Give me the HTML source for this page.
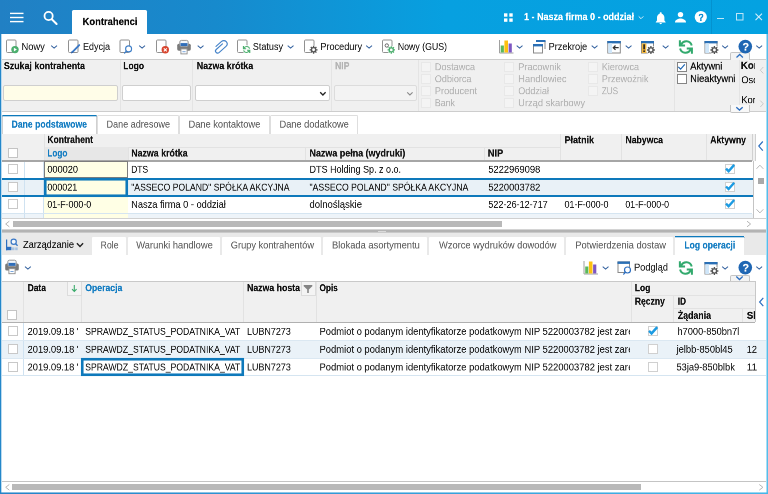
<!DOCTYPE html>
<html lang="pl"><head><meta charset="utf-8"><title>Kontrahenci</title>
<style>
html,body{margin:0;padding:0;background:#fff}
#r{position:relative;width:768px;height:494px;overflow:hidden;background:#fff;font-family:"Liberation Sans",sans-serif;font-size:20px;line-height:24px}
#r div,#r svg,#r span.t{position:absolute;display:block}
#r span.t{left:0;top:0;white-space:pre;transform-origin:0 0;z-index:2;will-change:transform;-webkit-text-stroke:0.2px currentColor}
#r .clip{overflow:hidden}

</style></head><body><div id="r">
<div style="left:0px;top:0px;width:768px;height:34px;background:linear-gradient(90deg,#2180c4 0%,#178acd 28%,#07a0e0 58%,#04a2e1 100%);"></div>
<div style="left:711px;top:0px;width:1px;height:34px;background:rgba(0,60,120,0.16);"></div>
<div style="left:72px;top:10px;width:75px;height:24px;background:#fff;border-radius:1.500px 1.500px 0 0;"></div>
<span class="t" style="transform:translate(82.50px,15.50px) scale(0.4713,.5);color:#080808;font-weight:bold;-webkit-text-stroke-width:.4px;">Kontrahenci</span>
<span class="t" style="transform:translate(524.00px,10.60px) scale(0.4499,.5);color:#fff;font-weight:bold;-webkit-text-stroke-width:.4px;">1 - Nasza firma 0 - oddział</span>
<span class="t" style="transform:translate(698.20px,11.30px) scale(0.4650,.5);color:#0a8fd4;font-weight:bold;-webkit-text-stroke-width:.4px;">?</span>
<div style="left:0px;top:34px;width:1px;height:460px;background:#2487ca;"></div>
<div style="left:1px;top:34px;width:1px;height:460px;background:rgba(28,134,203,0.3);"></div>
<div style="left:767px;top:34px;width:1px;height:460px;background:#56bdea;"></div>
<div style="left:766px;top:34px;width:1px;height:460px;background:rgba(86,189,234,0.5);"></div>
<div style="left:0px;top:493px;width:768px;height:1px;background:linear-gradient(90deg,#2684c8,#45b6e8);"></div>
<div style="left:0px;top:492px;width:768px;height:1px;background:linear-gradient(90deg,#2684c8,#45b6e8);opacity:.55;"></div>
<span class="t" style="transform:translate(21.50px,40.50px) scale(0.4659,.5);color:#222;">Nowy</span>
<span class="t" style="transform:translate(83.00px,40.50px) scale(0.4498,.5);color:#222;">Edycja</span>
<span class="t" style="transform:translate(252.80px,40.50px) scale(0.4528,.5);color:#222;">Statusy</span>
<span class="t" style="transform:translate(320.30px,40.50px) scale(0.4575,.5);color:#222;">Procedury</span>
<span class="t" style="transform:translate(397.80px,40.50px) scale(0.4384,.5);color:#222;">Nowy (GUS)</span>
<span class="t" style="transform:translate(548.60px,40.50px) scale(0.4569,.5);color:#222;">Przekroje</span>
<span class="t" style="transform:translate(742.40px,40.95px) scale(0.5000,.5);color:#fff;font-weight:bold;-webkit-text-stroke-width:.4px;font-size:22px;">?</span>
<div style="left:730px;top:51.5px;width:20px;height:8px;background:#f4f4f4;z-index:1;border:1px solid #c4c4c4;border-bottom:none;box-sizing:border-box;border-radius:2px 2px 0 0;"></div>
<div style="left:2px;top:59px;width:764px;height:53px;background:#f0f0f0;border-top:1px solid #cdcdcd;border-bottom:1px solid #cdcdcd;box-sizing:border-box;"></div>
<div style="left:120px;top:60px;width:1px;height:51px;background:#e4e4e4;"></div>
<div style="left:192px;top:60px;width:1px;height:51px;background:#e4e4e4;"></div>
<div style="left:331px;top:60px;width:1px;height:51px;background:#e4e4e4;"></div>
<div style="left:418px;top:60px;width:1px;height:51px;background:#e4e4e4;"></div>
<div style="left:674px;top:60px;width:1px;height:51px;background:#e4e4e4;"></div>
<div style="left:739px;top:60px;width:1px;height:51px;background:#e4e4e4;"></div>
<span class="t" style="transform:translate(3.90px,59.70px) scale(0.4422,.5);color:#111;font-weight:bold;-webkit-text-stroke-width:.4px;">Szukaj kontrahenta</span>
<span class="t" style="transform:translate(123.20px,59.70px) scale(0.4256,.5);color:#111;font-weight:bold;-webkit-text-stroke-width:.4px;">Logo</span>
<span class="t" style="transform:translate(196.80px,59.70px) scale(0.4412,.5);color:#111;font-weight:bold;-webkit-text-stroke-width:.4px;">Nazwa krótka</span>
<span class="t" style="transform:translate(335.00px,59.70px) scale(0.4349,.5);color:#b4b4b4;font-weight:bold;-webkit-text-stroke-width:.4px;">NIP</span>
<div style="left:3px;top:85px;width:115px;height:16px;background:#fffde8;border:1px solid #cfcfcf;box-sizing:border-box;border-radius:2px;"></div>
<div style="left:122px;top:85px;width:69px;height:16px;background:#fff;border:1px solid #cfcfcf;box-sizing:border-box;border-radius:2px;"></div>
<div style="left:195px;top:85px;width:135px;height:16px;background:#fff;border:1px solid #cfcfcf;box-sizing:border-box;border-radius:2px;"></div>
<div style="left:334px;top:85px;width:83px;height:16px;background:#f3f3f3;border:1px solid #dcdcdc;box-sizing:border-box;border-radius:2px;"></div>
<div style="left:421px;top:62px;width:10px;height:10px;background:#f4f4f4;border:1px solid #e8e8e8;box-sizing:border-box;"></div>
<span class="t" style="transform:translate(434.80px,60.80px) scale(0.4578,.5);color:#b4b4b4;">Dostawca</span>
<div style="left:421px;top:74px;width:10px;height:10px;background:#f4f4f4;border:1px solid #e8e8e8;box-sizing:border-box;"></div>
<span class="t" style="transform:translate(434.80px,72.80px) scale(0.4522,.5);color:#b4b4b4;">Odbiorca</span>
<div style="left:421px;top:86px;width:10px;height:10px;background:#f4f4f4;border:1px solid #e8e8e8;box-sizing:border-box;"></div>
<span class="t" style="transform:translate(434.80px,84.80px) scale(0.4629,.5);color:#b4b4b4;">Producent</span>
<div style="left:421px;top:98px;width:10px;height:10px;background:#f4f4f4;border:1px solid #e8e8e8;box-sizing:border-box;"></div>
<span class="t" style="transform:translate(434.80px,96.80px) scale(0.4430,.5);color:#b4b4b4;">Bank</span>
<div style="left:504.3px;top:62px;width:10px;height:10px;background:#f4f4f4;border:1px solid #e8e8e8;box-sizing:border-box;"></div>
<span class="t" style="transform:translate(518.20px,60.80px) scale(0.4639,.5);color:#b4b4b4;">Pracownik</span>
<div style="left:504.3px;top:74px;width:10px;height:10px;background:#f4f4f4;border:1px solid #e8e8e8;box-sizing:border-box;"></div>
<span class="t" style="transform:translate(518.20px,72.80px) scale(0.4672,.5);color:#b4b4b4;">Handlowiec</span>
<div style="left:504.3px;top:86px;width:10px;height:10px;background:#f4f4f4;border:1px solid #e8e8e8;box-sizing:border-box;"></div>
<span class="t" style="transform:translate(518.20px,84.80px) scale(0.4542,.5);color:#b4b4b4;">Oddział</span>
<div style="left:504.3px;top:98px;width:10px;height:10px;background:#f4f4f4;border:1px solid #e8e8e8;box-sizing:border-box;"></div>
<span class="t" style="transform:translate(518.20px,96.80px) scale(0.4659,.5);color:#b4b4b4;">Urząd skarbowy</span>
<div style="left:587.8px;top:62px;width:10px;height:10px;background:#f4f4f4;border:1px solid #e8e8e8;box-sizing:border-box;"></div>
<span class="t" style="transform:translate(601.80px,60.80px) scale(0.4522,.5);color:#b4b4b4;">Kierowca</span>
<div style="left:587.8px;top:74px;width:10px;height:10px;background:#f4f4f4;border:1px solid #e8e8e8;box-sizing:border-box;"></div>
<span class="t" style="transform:translate(601.80px,72.80px) scale(0.4567,.5);color:#b4b4b4;">Przewoźnik</span>
<div style="left:587.8px;top:86px;width:10px;height:10px;background:#f4f4f4;border:1px solid #e8e8e8;box-sizing:border-box;"></div>
<span class="t" style="transform:translate(601.80px,84.80px) scale(0.4050,.5);color:#b4b4b4;">ZUS</span>
<div style="left:676.5px;top:61.6px;width:10px;height:10px;background:#fff;border:1px solid #858585;box-sizing:border-box;"></div>
<div style="left:676.5px;top:74px;width:10px;height:10px;background:#fff;border:1px solid #858585;box-sizing:border-box;"></div>
<span class="t" style="transform:translate(690.20px,60.00px) scale(0.4659,.5);color:#0c0c0c;-webkit-text-stroke-width:.45px;">Aktywni</span>
<span class="t" style="transform:translate(690.20px,72.50px) scale(0.4664,.5);color:#0c0c0c;-webkit-text-stroke-width:.45px;">Nieaktywni</span>
<div class="clip" style="left:0;top:0;width:755px;height:494px"><span class="t" style="transform:translate(740.80px,59.30px) scale(0.4850,.5);color:#111;font-weight:bold;-webkit-text-stroke-width:.4px;">Kor</span></div>
<div class="clip" style="left:0;top:0;width:755px;height:494px"><span class="t" style="transform:translate(741.30px,73.80px) scale(0.4650,.5);color:#111;">Osc</span></div>
<div class="clip" style="left:0;top:0;width:755px;height:494px"><span class="t" style="transform:translate(741.30px,93.80px) scale(0.4650,.5);color:#111;">Kor</span></div>
<div style="left:730px;top:105px;width:20px;height:7.5px;background:#f8f8f8;border:1px solid #c4c4c4;border-top:none;box-sizing:border-box;border-radius:0 0 2px 2px;"></div>
<div style="left:2px;top:115px;width:95px;height:19px;background:#fff;border:1px solid #d0d0d0;border-bottom:none;border-top:1px solid #0e79bb;box-sizing:border-box;"></div>
<span class="t" style="transform:translate(11.50px,118.10px) scale(0.4327,.5);color:#147dc2;font-weight:bold;-webkit-text-stroke-width:.4px;">Dane podstawowe</span>
<div style="left:97px;top:115px;width:82px;height:18.5px;background:#fff;border:1px solid #dedede;border-bottom:none;box-sizing:border-box;border-radius:1.500px 1.500px 0 0;"></div>
<span class="t" style="transform:translate(106.50px,118.10px) scale(0.4533,.5);color:#626262;">Dane adresowe</span>
<div style="left:179px;top:115px;width:91px;height:18.5px;background:#fff;border:1px solid #dedede;border-bottom:none;box-sizing:border-box;border-radius:1.500px 1.500px 0 0;"></div>
<span class="t" style="transform:translate(188.50px,118.10px) scale(0.4646,.5);color:#626262;">Dane kontaktowe</span>
<div style="left:270px;top:115px;width:88px;height:18.5px;background:#fff;border:1px solid #dedede;border-bottom:none;box-sizing:border-box;border-radius:1.500px 1.500px 0 0;"></div>
<span class="t" style="transform:translate(279.50px,118.10px) scale(0.4617,.5);color:#626262;">Dane dodatkowe</span>
<div style="left:2px;top:134px;width:750.5px;height:26.5px;background:#f0f0f0;"></div>
<div style="left:44px;top:146.5px;width:516px;height:1px;background:#e2e2e2;"></div>
<div style="left:44px;top:147px;width:83.5px;height:13px;background:#e7e7e7;"></div>
<div style="left:44px;top:133.5px;width:1px;height:26.5px;background:#e2e2e2;"></div>
<div style="left:127.5px;top:147px;width:1px;height:13px;background:#e2e2e2;"></div>
<div style="left:305px;top:147px;width:1px;height:13px;background:#e2e2e2;"></div>
<div style="left:484px;top:147px;width:1px;height:13px;background:#e2e2e2;"></div>
<div style="left:560px;top:133.5px;width:1px;height:26.5px;background:#e2e2e2;"></div>
<div style="left:621px;top:133.5px;width:1px;height:26.5px;background:#e2e2e2;"></div>
<div style="left:706px;top:133.5px;width:1px;height:26.5px;background:#e2e2e2;"></div>
<div style="left:752px;top:133.5px;width:1px;height:27.5px;background:#d0d0d0;"></div>
<div style="left:753px;top:133.5px;width:2px;height:27px;background:#f0f0f0;"></div>
<div style="left:755px;top:133.5px;width:1px;height:27.5px;background:#d0d0d0;"></div>
<div style="left:753px;top:161px;width:1px;height:57px;background:#c4c4c4;"></div>
<div style="left:2px;top:160px;width:750px;height:1.5px;background:#a6a6a6;"></div>
<span class="t" style="transform:translate(47.30px,133.50px) scale(0.4284,.5);color:#111;font-weight:bold;-webkit-text-stroke-width:.4px;">Kontrahent</span>
<span class="t" style="transform:translate(47.30px,147.00px) scale(0.4092,.5);color:#147dc2;font-weight:bold;-webkit-text-stroke-width:.4px;">Logo</span>
<span class="t" style="transform:translate(131.20px,147.00px) scale(0.4412,.5);color:#111;font-weight:bold;-webkit-text-stroke-width:.4px;">Nazwa krótka</span>
<span class="t" style="transform:translate(309.50px,147.00px) scale(0.4466,.5);color:#111;font-weight:bold;-webkit-text-stroke-width:.4px;">Nazwa pełna (wydruki)</span>
<span class="t" style="transform:translate(487.80px,147.00px) scale(0.4619,.5);color:#111;font-weight:bold;-webkit-text-stroke-width:.4px;">NIP</span>
<span class="t" style="transform:translate(564.50px,133.80px) scale(0.4498,.5);color:#111;font-weight:bold;-webkit-text-stroke-width:.4px;">Płatnik</span>
<span class="t" style="transform:translate(625.50px,133.80px) scale(0.4324,.5);color:#111;font-weight:bold;-webkit-text-stroke-width:.4px;">Nabywca</span>
<span class="t" style="transform:translate(710.20px,133.80px) scale(0.4353,.5);color:#111;font-weight:bold;-webkit-text-stroke-width:.4px;">Aktywny</span>
<div style="left:8px;top:147.5px;width:10px;height:10px;background:#fff;border:1px solid #c4c4c4;box-sizing:border-box;"></div>
<div style="left:2px;top:178px;width:751px;height:18.5px;background:#e9f1f7;"></div>
<div style="left:2px;top:214px;width:751px;height:4px;background:#eef4f9;"></div>
<div style="left:44px;top:161.5px;width:83.5px;height:56.5px;background:#ffffe5;"></div>
<div style="left:23.5px;top:161.5px;width:1px;height:56.5px;background:#cfe2f1;"></div>
<div style="left:43px;top:161.5px;width:1px;height:56.5px;background:#cfe2f1;"></div>
<div style="left:2px;top:213px;width:750px;height:1px;background:#d5e5f1;"></div>
<div style="left:44px;top:160.5px;width:84px;height:17.5px;border:1px solid #7d7d7d;box-sizing:border-box;"></div>
<div style="left:2px;top:178px;width:751px;height:2px;background:#0e79bb;"></div>
<div style="left:2px;top:195px;width:751px;height:2px;background:#0e79bb;"></div>
<div style="left:44px;top:178px;width:84px;height:19px;background:#ffffe5;border:2px solid #0e79bb;box-sizing:border-box;"></div>
<div style="left:8px;top:164px;width:10px;height:10px;background:#fff;border:1px solid #c8c8c8;box-sizing:border-box;"></div>
<div style="left:724.5px;top:164px;width:10px;height:10px;background:#fff;border:1px solid #d0d0d0;box-sizing:border-box;"></div>
<div style="left:8px;top:181.9px;width:10px;height:10px;background:#fff;border:1px solid #c8c8c8;box-sizing:border-box;"></div>
<div style="left:724.5px;top:181.9px;width:10px;height:10px;background:#fff;border:1px solid #d0d0d0;box-sizing:border-box;"></div>
<div style="left:8px;top:199.1px;width:10px;height:10px;background:#fff;border:1px solid #c8c8c8;box-sizing:border-box;"></div>
<div style="left:724.5px;top:199.1px;width:10px;height:10px;background:#fff;border:1px solid #d0d0d0;box-sizing:border-box;"></div>
<span class="t" style="transform:translate(47.30px,163.20px) scale(0.4599,.5);color:#1c1c1c;">000020</span>
<span class="t" style="transform:translate(131.20px,163.20px) scale(0.4200,.5);color:#1c1c1c;">DTS</span>
<span class="t" style="transform:translate(309.50px,163.20px) scale(0.4498,.5);color:#1c1c1c;">DTS Holding Sp. z o.o.</span>
<span class="t" style="transform:translate(488.30px,163.20px) scale(0.4675,.5);color:#1c1c1c;">5222969098</span>
<span class="t" style="transform:translate(47.30px,181.10px) scale(0.4494,.5);color:#1c1c1c;">000021</span>
<span class="t" style="transform:translate(131.20px,181.10px) scale(0.4318,.5);color:#1c1c1c;">"ASSECO POLAND" SPÓŁKA AKCYJNA</span>
<span class="t" style="transform:translate(309.50px,181.10px) scale(0.4332,.5);color:#1c1c1c;">"ASSECO POLAND" SPÓŁKA AKCYJNA</span>
<span class="t" style="transform:translate(488.30px,181.10px) scale(0.4675,.5);color:#1c1c1c;">5220003782</span>
<span class="t" style="transform:translate(47.30px,198.30px) scale(0.4437,.5);color:#1c1c1c;">01-F-000-0</span>
<span class="t" style="transform:translate(131.20px,198.30px) scale(0.4625,.5);color:#1c1c1c;">Nasza firma 0 - oddział</span>
<span class="t" style="transform:translate(309.50px,198.30px) scale(0.4769,.5);color:#1c1c1c;">dolnośląskie</span>
<span class="t" style="transform:translate(488.30px,198.30px) scale(0.4534,.5);color:#1c1c1c;">522-26-12-717</span>
<span class="t" style="transform:translate(564.50px,198.30px) scale(0.4447,.5);color:#1c1c1c;">01-F-000-0</span>
<span class="t" style="transform:translate(625.30px,198.30px) scale(0.4417,.5);color:#1c1c1c;">01-F-000-0</span>
<div style="left:758px;top:177.5px;width:5.5px;height:6.5px;background:#a9a9a9;"></div>
<div style="left:2px;top:218px;width:764px;height:1px;background:#d0d0d0;"></div>
<div style="left:13px;top:221px;width:488.5px;height:6px;background:#b9b9b9;"></div>
<div style="left:2px;top:229px;width:764px;height:1px;background:#d4d4d4;"></div>
<div style="left:2px;top:230px;width:764px;height:2px;background:#b3b3b3;"></div>
<div style="left:2px;top:232px;width:764px;height:1px;background:#c9c9c9;"></div>
<div style="left:378px;top:231px;width:8px;height:1px;background:#d9d9d9;"></div>
<div style="left:2px;top:233px;width:764px;height:21.5px;background:#e9e9e9;"></div>
<div style="left:2px;top:254.5px;width:764px;height:1px;background:#fff;"></div>
<div style="left:92px;top:237px;width:34px;height:17.5px;background:#fff;border-radius:1px 1px 0 0;"></div>
<span class="t" style="transform:translate(100.60px,239.00px) scale(0.4351,.5);color:#626262;">Role</span>
<div style="left:128px;top:237px;width:92px;height:17.5px;background:#fff;border-radius:1px 1px 0 0;"></div>
<span class="t" style="transform:translate(136.20px,239.00px) scale(0.4677,.5);color:#626262;">Warunki handlowe</span>
<div style="left:222px;top:237px;width:99px;height:17.5px;background:#fff;border-radius:1px 1px 0 0;"></div>
<span class="t" style="transform:translate(230.80px,239.00px) scale(0.4619,.5);color:#626262;">Grupy kontrahentów</span>
<div style="left:323px;top:237px;width:104px;height:17.5px;background:#fff;border-radius:1px 1px 0 0;"></div>
<span class="t" style="transform:translate(332.00px,239.00px) scale(0.4673,.5);color:#626262;">Blokada asortymentu</span>
<div style="left:429px;top:237px;width:135px;height:17.5px;background:#fff;border-radius:1px 1px 0 0;"></div>
<span class="t" style="transform:translate(439.00px,239.00px) scale(0.4657,.5);color:#626262;">Wzorce wydruków dowodów</span>
<div style="left:566px;top:237px;width:107px;height:17.5px;background:#fff;border-radius:1px 1px 0 0;"></div>
<span class="t" style="transform:translate(575.30px,239.00px) scale(0.4662,.5);color:#626262;">Potwierdzenia dostaw</span>
<div style="left:675px;top:236px;width:69px;height:18.5px;background:#fff;border-top:1px solid #0e79bb;box-sizing:border-box;"></div>
<span class="t" style="transform:translate(684.30px,239.00px) scale(0.4289,.5);color:#147dc2;font-weight:bold;-webkit-text-stroke-width:.4px;">Log operacji</span>
<span class="t" style="transform:translate(23.00px,238.40px) scale(0.4634,.5);color:#111;">Zarządzanie</span>
<span class="t" style="transform:translate(634.00px,261.10px) scale(0.4632,.5);color:#222;">Podgląd</span>
<span class="t" style="transform:translate(742.40px,261.95px) scale(0.5000,.5);color:#fff;font-weight:bold;-webkit-text-stroke-width:.4px;font-size:22px;">?</span>
<div style="left:730px;top:274.8px;width:20px;height:7px;background:#f4f4f4;border:1px solid #c4c4c4;border-bottom:none;box-sizing:border-box;border-radius:2px 2px 0 0;"></div>
<div style="left:2px;top:281px;width:753px;height:41.5px;background:#f0f0f0;border-top:1px solid #c9c9c9;box-sizing:border-box;"></div>
<div style="left:23px;top:282px;width:1px;height:40px;background:#e2e2e2;"></div>
<div style="left:81px;top:282px;width:1px;height:40px;background:#e2e2e2;"></div>
<div style="left:243px;top:282px;width:1px;height:40px;background:#e2e2e2;"></div>
<div style="left:315.5px;top:282px;width:1px;height:40px;background:#e2e2e2;"></div>
<div style="left:631px;top:282px;width:1px;height:40px;background:#e2e2e2;"></div>
<div style="left:673px;top:295px;width:1px;height:27px;background:#e2e2e2;"></div>
<div style="left:742px;top:308.5px;width:1px;height:13.5px;background:#e2e2e2;"></div>
<div style="left:631px;top:294.5px;width:124px;height:1px;background:#e2e2e2;"></div>
<div style="left:673px;top:308px;width:82px;height:1px;background:#e2e2e2;"></div>
<div style="left:755px;top:281px;width:1px;height:41px;background:#c8c8c8;"></div>
<div style="left:2px;top:321.5px;width:753px;height:1.5px;background:#b0b0b0;"></div>
<div style="left:67px;top:282px;width:14.5px;height:13.5px;background:#f4f4f4;border:1px solid #dcdcdc;box-sizing:border-box;border-top:none;"></div>
<div style="left:301px;top:282px;width:14.5px;height:13.5px;background:#f4f4f4;border:1px solid #dcdcdc;box-sizing:border-box;border-top:none;"></div>
<span class="t" style="transform:translate(27.60px,281.70px) scale(0.4244,.5);color:#111;font-weight:bold;-webkit-text-stroke-width:.4px;">Data</span>
<span class="t" style="transform:translate(85.20px,281.70px) scale(0.4334,.5);color:#147dc2;font-weight:bold;-webkit-text-stroke-width:.4px;">Operacja</span>
<span class="t" style="transform:translate(247.00px,281.70px) scale(0.4375,.5);color:#111;font-weight:bold;-webkit-text-stroke-width:.4px;">Nazwa hosta</span>
<span class="t" style="transform:translate(319.50px,281.70px) scale(0.4117,.5);color:#111;font-weight:bold;-webkit-text-stroke-width:.4px;">Opis</span>
<span class="t" style="transform:translate(634.80px,281.70px) scale(0.4228,.5);color:#111;font-weight:bold;-webkit-text-stroke-width:.4px;">Log</span>
<span class="t" style="transform:translate(634.80px,295.10px) scale(0.4284,.5);color:#111;font-weight:bold;-webkit-text-stroke-width:.4px;">Ręczny</span>
<span class="t" style="transform:translate(677.80px,295.10px) scale(0.4100,.5);color:#111;font-weight:bold;-webkit-text-stroke-width:.4px;">ID</span>
<span class="t" style="transform:translate(677.80px,309.30px) scale(0.4393,.5);color:#111;font-weight:bold;-webkit-text-stroke-width:.4px;">Żądania</span>
<div class="clip" style="left:0;top:0;width:754.8px;height:494px"><span class="t" style="transform:translate(746.80px,309.30px) scale(0.4850,.5);color:#111;font-weight:bold;-webkit-text-stroke-width:.4px;">Sl</span></div>
<div style="left:7px;top:310px;width:10px;height:10px;background:#fff;border:1px solid #c4c4c4;box-sizing:border-box;"></div>
<div style="left:2px;top:340.5px;width:764px;height:17.8px;background:#eaf2f8;"></div>
<div style="left:23px;top:323px;width:1px;height:52px;background:#cfe2f1;"></div>
<div style="left:2px;top:340px;width:764px;height:1px;background:#dbe8f2;"></div>
<div style="left:2px;top:358px;width:764px;height:1px;background:#dbe8f2;"></div>
<div style="left:2px;top:375px;width:764px;height:1px;background:#d5e5f1;"></div>
<div style="left:8px;top:326.2px;width:10px;height:10px;background:#fff;border:1px solid #c8c8c8;box-sizing:border-box;"></div>
<div style="left:8px;top:344.1px;width:10px;height:10px;background:#fff;border:1px solid #c8c8c8;box-sizing:border-box;"></div>
<div style="left:8px;top:361.9px;width:10px;height:10px;background:#fff;border:1px solid #c8c8c8;box-sizing:border-box;"></div>
<div style="left:647.5px;top:326.2px;width:10px;height:10px;background:#fff;border:1px solid #d0d0d0;box-sizing:border-box;"></div>
<div style="left:647.5px;top:344.1px;width:10px;height:10px;background:#fff;border:1px solid #d0d0d0;box-sizing:border-box;"></div>
<div style="left:647.5px;top:361.9px;width:10px;height:10px;background:#fff;border:1px solid #d0d0d0;box-sizing:border-box;"></div>
<div style="left:81px;top:358px;width:163px;height:18px;background:#fff;border:2px solid #0e79bb;box-sizing:border-box;"></div>
<span class="t" style="transform:translate(27.60px,325.30px) scale(0.4665,.5);color:#1c1c1c;">2019.09.18</span>
<div class="clip" style="left:0;top:0;width:78.4px;height:494px"><span class="t" style="transform:translate(76.80px,325.30px) scale(0.4650,.5);color:#1c1c1c;">'</span></div>
<span class="t" style="transform:translate(85.20px,325.30px) scale(0.4323,.5);color:#1c1c1c;">SPRAWDZ_STATUS_PODATNIKA_VAT</span>
<span class="t" style="transform:translate(247.00px,325.30px) scale(0.4477,.5);color:#1c1c1c;">LUBN7273</span>
<span class="t" style="transform:translate(319.50px,325.30px) scale(0.4703,.5);color:#1c1c1c;">Podmiot o podanym identyfikatorze podatkowym NIP 5220003782 jest zar</span>
<div class="clip" style="left:0;top:0;width:629.8px;height:494px"><span class="t" style="transform:translate(628.20px,325.30px) scale(0.4650,.5);color:#1c1c1c;">e</span></div>
<span class="t" style="transform:translate(677.50px,325.30px) scale(0.4623,.5);color:#1c1c1c;">h7000-850bn7l</span>
<span class="t" style="transform:translate(27.60px,343.20px) scale(0.4665,.5);color:#1c1c1c;">2019.09.18</span>
<div class="clip" style="left:0;top:0;width:78.4px;height:494px"><span class="t" style="transform:translate(76.80px,343.20px) scale(0.4650,.5);color:#1c1c1c;">'</span></div>
<span class="t" style="transform:translate(85.20px,343.20px) scale(0.4323,.5);color:#1c1c1c;">SPRAWDZ_STATUS_PODATNIKA_VAT</span>
<span class="t" style="transform:translate(247.00px,343.20px) scale(0.4477,.5);color:#1c1c1c;">LUBN7273</span>
<span class="t" style="transform:translate(319.50px,343.20px) scale(0.4703,.5);color:#1c1c1c;">Podmiot o podanym identyfikatorze podatkowym NIP 5220003782 jest zar</span>
<div class="clip" style="left:0;top:0;width:629.8px;height:494px"><span class="t" style="transform:translate(628.20px,343.20px) scale(0.4650,.5);color:#1c1c1c;">e</span></div>
<span class="t" style="transform:translate(676.50px,343.20px) scale(0.4679,.5);color:#1c1c1c;">jelbb-850bl45</span>
<span class="t" style="transform:translate(746.80px,343.20px) scale(0.4584,.5);color:#1c1c1c;">12</span>
<span class="t" style="transform:translate(27.60px,361.00px) scale(0.4665,.5);color:#1c1c1c;">2019.09.18</span>
<div class="clip" style="left:0;top:0;width:78.4px;height:494px"><span class="t" style="transform:translate(76.80px,361.00px) scale(0.4650,.5);color:#1c1c1c;">'</span></div>
<span class="t" style="transform:translate(85.20px,361.00px) scale(0.4323,.5);color:#1c1c1c;">SPRAWDZ_STATUS_PODATNIKA_VAT</span>
<span class="t" style="transform:translate(247.00px,361.00px) scale(0.4477,.5);color:#1c1c1c;">LUBN7273</span>
<span class="t" style="transform:translate(319.50px,361.00px) scale(0.4703,.5);color:#1c1c1c;">Podmiot o podanym identyfikatorze podatkowym NIP 5220003782 jest zar</span>
<div class="clip" style="left:0;top:0;width:629.8px;height:494px"><span class="t" style="transform:translate(628.20px,361.00px) scale(0.4650,.5);color:#1c1c1c;">e</span></div>
<span class="t" style="transform:translate(676.50px,361.00px) scale(0.4640,.5);color:#1c1c1c;">53ja9-850blbk</span>
<span class="t" style="transform:translate(746.80px,361.00px) scale(0.4912,.5);color:#1c1c1c;">11</span>
<div style="left:2px;top:481px;width:764px;height:1px;background:#c4c4c4;"></div>
<div style="left:12px;top:484.3px;width:628.5px;height:6px;background:#b9b9b9;"></div>
<svg style="left:0;top:0;z-index:1;pointer-events:none" width="768" height="494" viewBox="0 0 768 494"><rect x="10" y="12.7" width="13.5" height="1.400" fill="#fff"/><rect x="10" y="16.8" width="13.5" height="1.400" fill="#fff"/><rect x="10" y="20.9" width="13.5" height="1.400" fill="#fff"/><circle cx="48.6" cy="16" r="4.1" fill="none" stroke="#fff" stroke-width="1.8"/><path d="M51.8 19.2L56.6 24" stroke="#fff" stroke-width="2" stroke-linecap="round"/><rect x="504" y="13.3" width="3.400" height="3.400" fill="#fff"/><rect x="504" y="18.4" width="3.400" height="3.400" fill="#fff"/><rect x="509.3" y="13.3" width="3.400" height="3.400" fill="#fff"/><rect x="509.3" y="18.4" width="3.400" height="3.400" fill="#fff"/><path d="M638.7 16.400l2.300 2.300 2.300-2.300" fill="none" stroke="#d8effa" stroke-width="1"/><path d="M660.7 12.3c-.6 0-1 .4-1 1v.4c-1.7.5-2.7 2-2.7 3.900v3l-1.200 1.300v.6h9.800v-.6l-1.200-1.300v-3c0-1.900-1-3.400-2.700-3.900v-.4c0-.6-.4-1-1-1zM659.500 23.100h2.400c0 .7-.5 1.200-1.200 1.200s-1.200-.5-1.200-1.200z" fill="#fff"/><circle cx="680.5" cy="14.6" r="2.7" fill="#fff"/><path d="M675 22.300c0-2.500 3.600-3.700 5.500-3.700s5.500 1.200 5.500 3.700v.2h-11z" fill="#fff"/><circle cx="700.8" cy="17" r="6.1" fill="#fff"/><rect x="717" y="18" width="7" height="1" fill="#c0e6f7"/><rect x="736.5" y="13.5" width="6.5" height="6.5" fill="none" stroke="#bfe5f7" stroke-width="1"/><path d="M755.5 13.700l6.500 6.500M762 13.700l-6.500 6.500" stroke="#d4eefa" stroke-width="1.100"/><rect x="6.5" y="40" width="9.5" height="12.5" rx="1" fill="#fff" stroke="#919191" stroke-width="1"/><circle cx="15" cy="49.600" r="3.700" fill="#4caf6e"/><path d="M13.900 47.800l3 1.800-3 1.800z" fill="#fff"/><path d="M51.2 45.6l2.9 2.5 2.9 -2.5" fill="none" stroke="#33619f" stroke-width="1.05"/><rect x="68.5" y="40" width="9.5" height="12.5" rx="1" fill="#fff" stroke="#919191" stroke-width="1"/><path d="M72.600 51.800l6.600-6.700" stroke="#3a78c6" stroke-width="1.900" stroke-linecap="round"/><path d="M71 53.400l.5-2.200 1.700 1.600z" fill="#2a5ea8"/><rect x="120" y="40" width="9.5" height="12.5" rx="1" fill="#fff" stroke="#919191" stroke-width="1"/><circle cx="128.600" cy="48.900" r="3" fill="#fff" stroke="#3f7fc8" stroke-width="1.100"/><path d="M126.400 51.100l-1.800 1.900" stroke="#3f7fc8" stroke-width="1.300" stroke-linecap="round"/><path d="M139.2 45.6l2.9 2.5 2.9 -2.5" fill="none" stroke="#33619f" stroke-width="1.05"/><rect x="156.5" y="40" width="9.5" height="12.5" rx="1" fill="#fff" stroke="#919191" stroke-width="1"/><circle cx="165.300" cy="49.800" r="3.700" fill="#d8452e"/><path d="M163.800 48.300l3 3M166.800 48.300l-3 3" stroke="#fff" stroke-width="1.100"/><g><rect x="177.2" y="43.7" width="13.600" height="7" rx="1.600" fill="#7a7a7a"/><rect x="179.8" y="40.4" width="8.400" height="6.300" rx="1.600" fill="#f2f6fb" stroke="#8c8c8c" stroke-width=".9"/><rect x="180.5" y="43.1" width="7" height="3" fill="#2f6db8"/><rect x="180.9" y="48.9" width="6.200" height="5" fill="#fff" stroke="#8c8c8c" stroke-width=".9"/><rect x="182.4" y="51.2" width="3.200" height="1" fill="#7aa7dd"/></g><path d="M197.7 45.6l2.9 2.5 2.9 -2.5" fill="none" stroke="#33619f" stroke-width="1.05"/><g transform="translate(220.300 47) rotate(-42) translate(-8.300 -4.300)"><path d="M5.500 1H13a3.300 3.300 0 0 1 0 6.600H3.600a2.100 2.100 0 0 1 0-4.200H12" fill="none" stroke="#4583c9" stroke-width="1.150" stroke-linecap="round"/></g><rect x="237.5" y="40" width="9.5" height="12.5" rx="1" fill="#fff" stroke="#919191" stroke-width="1"/><circle cx="246.500" cy="49.500" r="4.200" fill="#fff"/><g transform="translate(246.6 49.5) scale(0.54717)"><g stroke="#4caf6e" stroke-width="2.1931" fill="none"><path d="M-5.700 -6.500V-1.400H-0.800"/><path d="M-4.500 -2.300A5.300 5.300 0 0 1 5.500 -1.500"/><path d="M5.700 6.500V1.400H0.800"/><path d="M4.500 2.300A5.300 5.300 0 0 1 -5.500 1.500"/></g><path d="M-5.700 -4.600V-1.400H-2.600Z" fill="#4caf6e"/><path d="M5.700 4.600V1.400H2.600Z" fill="#4caf6e"/></g><path d="M287.7 45.6l2.9 2.5 2.9 -2.5" fill="none" stroke="#33619f" stroke-width="1.05"/><rect x="304.5" y="40" width="9.5" height="12.5" rx="1" fill="#fff" stroke="#919191" stroke-width="1"/><circle cx="313.600" cy="49.800" r="4.200" fill="#fff"/><path d="M316.42 49.15L317.57 49.14L317.57 50.46L316.42 50.45L316.06 51.34L316.88 52.14L315.94 53.08L315.14 52.26L314.25 52.62L314.26 53.77L312.94 53.77L312.95 52.62L312.06 52.26L311.26 53.08L310.32 52.14L311.14 51.34L310.78 50.45L309.63 50.46L309.63 49.14L310.78 49.15L311.14 48.26L310.32 47.46L311.26 46.52L312.06 47.34L312.95 46.98L312.94 45.83L314.26 45.83L314.25 46.98L315.14 47.34L315.94 46.52L316.88 47.46L316.06 48.26z" fill="#555"/><circle cx="313.6" cy="49.8" r="1.45" fill="#fff"/><path d="M366.2 45.6l2.9 2.5 2.9 -2.5" fill="none" stroke="#33619f" stroke-width="1.05"/><rect x="382.5" y="40" width="9.5" height="12.5" rx="1" fill="#fff" stroke="#919191" stroke-width="1"/><circle cx="386.800" cy="45.500" r="1.700" fill="none" stroke="#666" stroke-width="1"/><circle cx="391.300" cy="49.900" r="3.900" fill="#fff"/><path d="M393.95 49.29L395.03 49.28L395.03 50.52L393.95 50.51L393.61 51.34L394.38 52.10L393.50 52.98L392.74 52.21L391.91 52.55L391.92 53.63L390.68 53.63L390.69 52.55L389.86 52.21L389.10 52.98L388.22 52.10L388.99 51.34L388.65 50.51L387.57 50.52L387.57 49.28L388.65 49.29L388.99 48.46L388.22 47.70L389.10 46.82L389.86 47.59L390.69 47.25L390.68 46.17L391.92 46.17L391.91 47.25L392.74 47.59L393.50 46.82L394.38 47.70L393.61 48.46z" fill="#4caf6e"/><circle cx="391.3" cy="49.9" r="1.36" fill="#fff"/><path d="M499.5 40v13h14" fill="none" stroke="#a0a0a0" stroke-width="1"/><rect x="500.7" y="45.5" width="3.200" height="7" fill="#5cb85c"/><rect x="504.4" y="40.5" width="3.600" height="12" fill="#fdc010"/><rect x="508.6" y="43.5" width="3.200" height="9" fill="#7e57c2"/><path d="M516.7 45.6l2.9 2.5 2.9 -2.5" fill="none" stroke="#33619f" stroke-width="1.05"/><path d="M536.500 41h8.500v8" fill="none" stroke="#8a8a8a" stroke-width="1"/><rect x="536" y="40" width="9.500" height="2" fill="#2a6fb5"/><rect x="533.5" y="44.5" width="9" height="8.5" fill="#fff" stroke="#8a8a8a" stroke-width="1"/><rect x="533" y="44" width="10" height="2.400" fill="#2a6fb5"/><path d="M591.7 45.6l2.9 2.5 2.9 -2.5" fill="none" stroke="#33619f" stroke-width="1.05"/><rect x="607.8" y="41.5" width="12.5" height="11.5" fill="#fff" stroke="#8a8a8a" stroke-width="1"/><rect x="607.3" y="41" width="13.5" height="2.400" fill="#2a6fb5"/><rect x="608.300" y="43.400" width="3.700" height="9.600" fill="#cfe6f9"/><path d="M618.700 47.700h-5M615.500 45.500l-2.200 2.200 2.200 2.200" fill="none" stroke="#333" stroke-width="1.300"/><path d="M625.7 45.6l2.9 2.5 2.9 -2.5" fill="none" stroke="#33619f" stroke-width="1.05"/><rect x="641.5" y="41.5" width="12" height="11.5" fill="#fff" stroke="#8a8a8a" stroke-width="1"/><rect x="641" y="41" width="13" height="2.400" fill="#2a6fb5"/><rect x="641.800" y="43.400" width="4.600" height="9.600" fill="#f2b63c"/><rect x="643.300" y="44.300" width="1.600" height="5" fill="#222"/><rect x="643.300" y="50.400" width="1.600" height="1.600" fill="#222"/><circle cx="650.900" cy="50" r="4.500" fill="#fff"/><path d="M653.72 49.35L654.87 49.34L654.87 50.66L653.72 50.65L653.36 51.54L654.18 52.34L653.24 53.28L652.44 52.46L651.55 52.82L651.56 53.97L650.24 53.97L650.25 52.82L649.36 52.46L648.56 53.28L647.62 52.34L648.44 51.54L648.08 50.65L646.93 50.66L646.93 49.34L648.08 49.35L648.44 48.46L647.62 47.66L648.56 46.72L649.36 47.54L650.25 47.18L650.24 46.03L651.56 46.03L651.55 47.18L652.44 47.54L653.24 46.72L654.18 47.66L653.36 48.46z" fill="#555"/><circle cx="650.9" cy="50" r="1.45" fill="#fff"/><path d="M662.7 45.6l2.9 2.5 2.9 -2.5" fill="none" stroke="#33619f" stroke-width="1.05"/><g transform="translate(685.9 47) scale(1.0566)"><g stroke="#33aa6e" stroke-width="1.89286" fill="none"><path d="M-5.700 -6.500V-1.400H-0.800"/><path d="M-4.500 -2.300A5.300 5.300 0 0 1 5.500 -1.500"/><path d="M5.700 6.500V1.400H0.800"/><path d="M4.500 2.300A5.300 5.300 0 0 1 -5.500 1.500"/></g><path d="M-5.700 -4.600V-1.400H-2.600Z" fill="#33aa6e"/><path d="M5.700 4.600V1.400H2.600Z" fill="#33aa6e"/></g><rect x="705" y="41.5" width="12" height="11.5" fill="#fff" stroke="#8a8a8a" stroke-width="1"/><rect x="704.5" y="41" width="13" height="2.400" fill="#2a6fb5"/><rect x="705.300" y="43.400" width="3.700" height="9.600" fill="#cfe6f9"/><circle cx="714.400" cy="50" r="4.500" fill="#fff"/><path d="M717.22 49.35L718.37 49.34L718.37 50.66L717.22 50.65L716.86 51.54L717.68 52.34L716.74 53.28L715.94 52.46L715.05 52.82L715.06 53.97L713.74 53.97L713.75 52.82L712.86 52.46L712.06 53.28L711.12 52.34L711.94 51.54L711.58 50.65L710.43 50.66L710.43 49.34L711.58 49.35L711.94 48.46L711.12 47.66L712.06 46.72L712.86 47.54L713.75 47.18L713.74 46.03L715.06 46.03L715.05 47.18L715.94 47.54L716.74 46.72L717.68 47.66L716.86 48.46z" fill="#555"/><circle cx="714.4" cy="50" r="1.45" fill="#fff"/><path d="M722.2 45.6l2.9 2.5 2.9 -2.5" fill="none" stroke="#33619f" stroke-width="1.05"/><circle cx="745.3" cy="46.6" r="6.800" fill="#1f66b3"/><path d="M756.3 45.6l2.9 2.5 2.9 -2.5" fill="none" stroke="#33619f" stroke-width="1.05"/><path d="M736.5 57.4l3.2 -2.9 3.2 2.9" fill="none" stroke="#2d6fc0" stroke-width="1.3"/><path d="M320.2 92.3l2.7 2.7 2.7 -2.7" fill="none" stroke="#222" stroke-width="1.3"/><path d="M407.2 92.3l2.7 2.7 2.7 -2.7" fill="none" stroke="#8a8a8a" stroke-width="1.1"/><path d="M678.3 66.8l2.300 2.400 4.200-4.900" fill="none" stroke="#1f66b3" stroke-width="1.200"/><path d="M763.300 67l-3 3.200 3 3.200" fill="none" stroke="#c9c9c9" stroke-width="1"/><path d="M760.300 100.600l3 3.200-3 3.200" fill="none" stroke="#c9c9c9" stroke-width="1"/><path d="M736.3 107.2l3.2 2.9 3.2 -2.9" fill="none" stroke="#2d6fc0" stroke-width="1.3"/><rect x="2" y="116" width="95" height="0.500" fill="#0e79bb" opacity="0.6"/><path d="M762.800 141.500l-4 4.600 4 4.600" fill="none" stroke="#2d6fc0" stroke-width="1.200"/><rect x="45.250" y="179.250" width="81.500" height="16.500" fill="none" stroke="#0e79bb" stroke-width="2.600"/><path d="M726 168.6l2.600 2.600 5.600-6.300" fill="none" stroke="#1c9be2" stroke-width="2.400"/><path d="M726 186.5l2.600 2.600 5.600-6.300" fill="none" stroke="#1c9be2" stroke-width="2.400"/><path d="M726 203.7l2.600 2.600 5.600-6.300" fill="none" stroke="#1c9be2" stroke-width="2.400"/><path d="M756.500 168.800l3.400-3.600 3.400 3.600" fill="none" stroke="#b5b5b5" stroke-width="1"/><path d="M756.500 209.300l3.400 3.600 3.400-3.600" fill="none" stroke="#b5b5b5" stroke-width="1"/><path d="M9.300 221.200l-3.600 2.800 3.600 2.800" fill="none" stroke="#b5b5b5" stroke-width="1"/><path d="M747 221.200l3.600 2.800-3.600 2.800" fill="none" stroke="#b5b5b5" stroke-width="1"/><rect x="675" y="237" width="70" height="0.500" fill="#0e79bb" opacity="0.6"/><path d="M76.9 243.3l3.1 3.2 3.1 -3.2" fill="none" stroke="#222" stroke-width="1.4"/><rect x="6" y="239.500" width="1.200" height="10.700" fill="#2d6fc0"/><rect x="6" y="246.800" width="5.400" height="3.400" fill="#2d6fc0"/><rect x="12" y="247.400" width="2.500" height="2.800" fill="#a9c3e0"/><rect x="15.200" y="247.400" width="2.500" height="2.800" fill="#a9c3e0"/><circle cx="13.700" cy="241.800" r="2.600" fill="#f4f8fc" stroke="#3a78c6" stroke-width="1.200"/><path d="M15.600 243.800l2 2" stroke="#3a78c6" stroke-width="1.300"/><g><rect x="5.2" y="263.5" width="13.600" height="7" rx="1.600" fill="#7a7a7a"/><rect x="7.8" y="260.2" width="8.400" height="6.300" rx="1.600" fill="#f2f6fb" stroke="#8c8c8c" stroke-width=".9"/><rect x="8.5" y="262.9" width="7" height="3" fill="#2f6db8"/><rect x="8.9" y="268.7" width="6.200" height="5" fill="#fff" stroke="#8c8c8c" stroke-width=".9"/><rect x="10.4" y="271" width="3.200" height="1" fill="#7aa7dd"/></g><path d="M25 266.6l2.9 2.5 2.9 -2.5" fill="none" stroke="#33619f" stroke-width="1.05"/><path d="M584 261v13h14" fill="none" stroke="#a0a0a0" stroke-width="1"/><rect x="585.2" y="266.5" width="3.200" height="7" fill="#5cb85c"/><rect x="588.9" y="261.5" width="3.600" height="12" fill="#fdc010"/><rect x="593.1" y="264.5" width="3.200" height="9" fill="#7e57c2"/><path d="M602.7 266.6l2.9 2.5 2.9 -2.5" fill="none" stroke="#33619f" stroke-width="1.05"/><rect x="618" y="262" width="11.5" height="10.5" fill="#fff" stroke="#8a8a8a" stroke-width="1"/><rect x="617.5" y="261.5" width="12.5" height="2.400" fill="#2a6fb5"/><circle cx="627.500" cy="270" r="3" fill="#fff" stroke="#2d6fc0" stroke-width="1.200"/><path d="M625.400 272.200l-1.700 1.900" stroke="#2d6fc0" stroke-width="1.300" stroke-linecap="round"/><g transform="translate(685.9 268) scale(1.0566)"><g stroke="#33aa6e" stroke-width="1.89286" fill="none"><path d="M-5.700 -6.500V-1.400H-0.800"/><path d="M-4.500 -2.300A5.300 5.300 0 0 1 5.500 -1.500"/><path d="M5.700 6.500V1.400H0.800"/><path d="M4.500 2.300A5.300 5.300 0 0 1 -5.500 1.500"/></g><path d="M-5.700 -4.600V-1.400H-2.600Z" fill="#33aa6e"/><path d="M5.700 4.600V1.400H2.600Z" fill="#33aa6e"/></g><rect x="705" y="262.5" width="12" height="11.5" fill="#fff" stroke="#8a8a8a" stroke-width="1"/><rect x="704.5" y="262" width="13" height="2.400" fill="#2a6fb5"/><rect x="705.300" y="264.400" width="3.700" height="9.600" fill="#cfe6f9"/><circle cx="714.400" cy="271" r="4.500" fill="#fff"/><path d="M717.22 270.35L718.37 270.34L718.37 271.66L717.22 271.65L716.86 272.54L717.68 273.34L716.74 274.28L715.94 273.46L715.05 273.82L715.06 274.97L713.74 274.97L713.75 273.82L712.86 273.46L712.06 274.28L711.12 273.34L711.94 272.54L711.58 271.65L710.43 271.66L710.43 270.34L711.58 270.35L711.94 269.46L711.12 268.66L712.06 267.72L712.86 268.54L713.75 268.18L713.74 267.03L715.06 267.03L715.05 268.18L715.94 268.54L716.74 267.72L717.68 268.66L716.86 269.46z" fill="#555"/><circle cx="714.4" cy="271" r="1.45" fill="#fff"/><path d="M722.2 266.6l2.9 2.5 2.9 -2.5" fill="none" stroke="#33619f" stroke-width="1.05"/><circle cx="745.3" cy="267.6" r="6.800" fill="#1f66b3"/><path d="M756.3 266.6l2.9 2.5 2.9 -2.5" fill="none" stroke="#33619f" stroke-width="1.05"/><path d="M736.3 276.6l3.2 2.9 3.2 -2.9" fill="none" stroke="#2d6fc0" stroke-width="1.3"/><path d="M74.300 285v6.300M72 289.200l2.300 2.300 2.300-2.300" fill="none" stroke="#3bab6c" stroke-width="1.100"/><path d="M303.700 285h8.600v1.300l-3.500 3.300v3.400h-1.600v-3.400l-3.500-3.300z" fill="#858585"/><path d="M763.300 297.800l-3.700 4.200 3.700 4.200" fill="none" stroke="#2d6fc0" stroke-width="1.200"/><path d="M649 330.8l2.600 2.600 5.600-6.300" fill="none" stroke="#1c9be2" stroke-width="2.400"/><rect x="82.250" y="359.250" width="160.500" height="15.500" fill="none" stroke="#0e79bb" stroke-width="2.600"/><path d="M9.300 484.500l-3.600 2.800 3.600 2.800" fill="none" stroke="#b5b5b5" stroke-width="1"/><path d="M759.300 484.500l3.600 2.800-3.600 2.800" fill="none" stroke="#b5b5b5" stroke-width="1"/></svg>
</div></body></html>
